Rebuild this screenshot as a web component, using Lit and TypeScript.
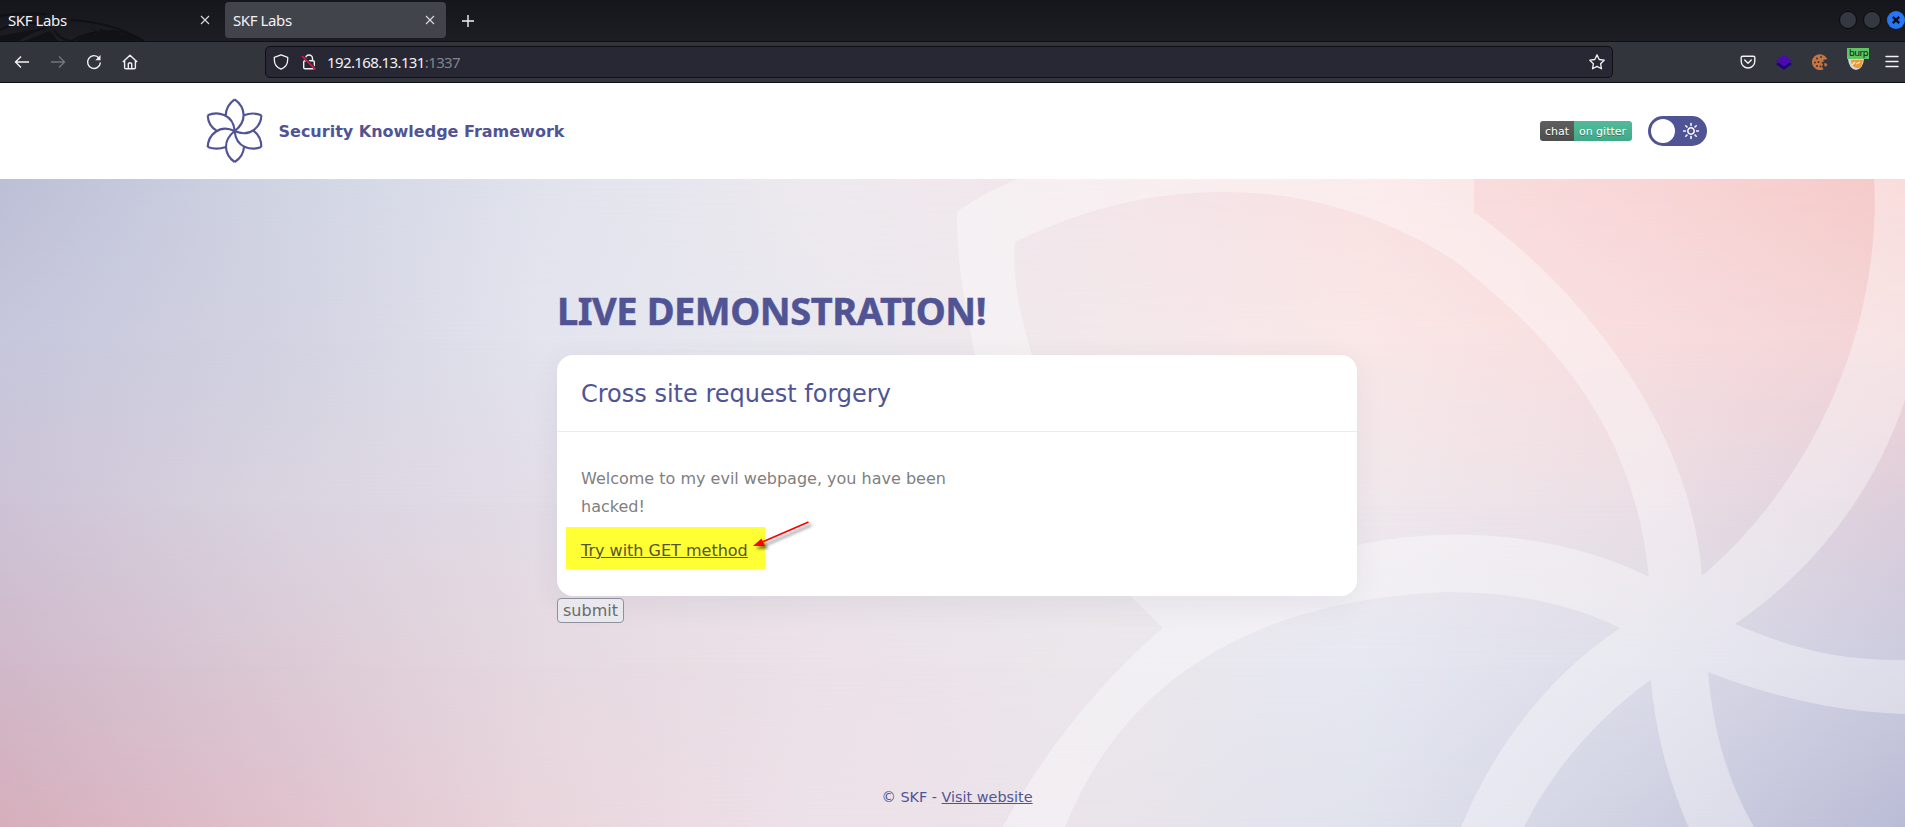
import { LitElement, html, css, svg } from "lit";
import { customElement } from "lit/decorators.js";
import { styleMap } from "lit/directives/style-map.js";

const MESH = [
  ["#bdbfd7", "#d0d4e3", "#e1e3ed", "#eeeaef", "#f3e6ea", "#f9e1e2", "#f9d6d7", "#f5cac8"],
  ["#c6c7dc", "#d2d2e1", "#e3e4ee", "#e9e8ee", "#f2e8eb", "#fae7e7", "#f8dddf", "#f3d4d6"],
  ["#cdc3d6", "#d9d3df", "#e3dde7", "#e8e4ea", "#eae6eb", "#f0e8ec", "#ebdfe5", "#ddcedb"],
  ["#d0b9ca", "#dbc9d5", "#e6d9e0", "#ece1e8", "#ebe7eb", "#e6e8f2", "#dcdde9", "#cbcbdf"],
  ["#d6aebb", "#dfc0cb", "#e9d5dc", "#ede1e8", "#eae4ea", "#e0e2ec", "#cfd1e2", "#babbd5"],
];

@customElement("page-backdrop")
export class PageBackdrop extends LitElement {
  static styles = css`
    :host { position: absolute; inset: 0; overflow: hidden; display: block; }
    .layer { position: absolute; inset: 0; }
    svg { position: absolute; left: 0; top: 0; display: block; }
  `;
  render() {
    return html`
      ${MESH.map((row, i) => {
        const mask = i === 0 ? "none" : `linear-gradient(to bottom, transparent ${(i - 1) * 25}%, #000 ${i * 25}%)`;
        return html`<div class="layer" style=${styleMap({
          background: `linear-gradient(to right, ${row.join(",")})`,
          maskImage: mask,
        })}></div>`;
      })}
      <svg width="1905" height="648" viewBox="0 179 1905 648">
        <g fill="#fff" opacity="0.37">
          <path d="M957 211.500Q988 190 1018 179L1474 179L1474 212C1592 297 1692 435 1702 576L1690 610L1649 577C1636 450 1578 362 1477 279C1457 261 1436 248 1413 237C1275 168 1130 185 1015 242C1012 280 1020 315 1032 355C1070 460 1140 560 1260 580L1163 627.500C1065 530 985 455 975 355C962 290 957 260 957 211.500Z" />
          <path d="M1649 577C1560 532 1440 524 1345 548L1124 590L1163 627.500Q1064 715 1002.500 827L1065 827C1120 690 1240 600 1448 592C1510 592 1570 603 1620 628L1700 660L1690 580Z" />
          <path d="M1702 576C1815 480 1882 325 1874 179L1905 179L1905 400C1875 490 1815 570 1735 624L1680 640L1649 590Z" />
          <path d="M1735 624C1790 648 1840 661 1905 660L1905 714C1840 712 1775 698 1708 672L1651 660L1680 600Z" />
          <path d="M1708 672C1713 730 1727 780 1754 827L1688.500 827C1668 780 1655 730 1651 679.500L1660 630Z" />
          <path d="M1651 679.500C1595 720 1552 771 1524 827L1461 827C1495 745 1550 675 1620 628L1700 620L1708 660Z" />
        </g>
      </svg>`;
  }
}

const logo = svg`<path d="M134 43C165 65 174 108 134 138M134 43Q107 62 107 93M53 91C80 78 130 85 134 138M53 91Q55 123 80 137M53 186C55 150 88 116 134 138M53 186Q80 196 107 186M134 231C103 210 96 168 134 138M134 231Q161 213 162 185M214 186C186 197 138 191 134 138M214 186Q214 154 190 137M214 91C214 122 182 160 134 138M214 91Q188 80 162 91" fill="none" stroke="#505494" stroke-width="6.500" stroke-linejoin="round"/>`;

@customElement("browser-chrome")
export class BrowserChrome extends LitElement {
  static styles = css`
    :host { display: block; font-family: "Noto Sans", sans-serif; color: #f2f2f4; }
    svg { display: block; flex: none; }
    .tabs { position: relative; display: flex; align-items: center; background: linear-gradient(#15161b, #1c1e23); border-bottom: 1px solid #0e0f12; box-sizing: border-box; height: 42px; overflow: hidden; }
    .dragon { position: absolute; left: 0; top: 0; }
    .tab { position: relative; box-sizing: border-box; width: 221px; height: 36px; margin-bottom: 2px; display: flex; align-items: center; justify-content: space-between; padding: 0 11px 0 8px; font-size: 15px; letter-spacing: -0.4px; border-radius: 4px; }
    .tab span { padding-top: 1px; }
    .first { width: 215px; margin-right: 10px; padding-right: 5px; }
    .active { background: #42444c; }
    .plus { margin-left: 16px; }
    .wins { margin-left: auto; display: flex; gap: 6px; margin-right: 0; margin-bottom: 2px; }
    .bar { height: 41px; box-sizing: border-box; background: #33353d; border-bottom: 1px solid #0e0f12; display: flex; align-items: center; padding: 0 5px 0 14px; }
    .nav { display: flex; gap: 20px; width: 251px; align-items: center; }
    .url { box-sizing: border-box; width: 1348px; height: 32px; border: 1px solid #0e0f12; border-radius: 5px; background: #272833; display: flex; align-items: center; padding: 0 7px; font-size: 15px; letter-spacing: -0.62px; }
    .addr { margin-left: 10px; flex: 1; white-space: nowrap; }
    .port { color: #83848c; }
    .shield { margin-right: 12px; }
    .exts { display: flex; margin-left: auto; align-items: center; gap: 20px; }
    .ext { position: relative; width: 16px; height: 18px; }
    .badge { position: absolute; left: -1px; top: -5px; height: 11px; background: #5fc463; color: #10230f; font-size: 9.5px; letter-spacing: -0.6px; line-height: 10px; padding: 0 1px 0 2px; white-space: nowrap; }
  `;
  cross() {
    return html`<svg width="10" height="10" viewBox="0 0 10 10"><path d="M1 1L9 9M9 1L1 9" stroke="#dcdce0" stroke-width="1.1" /></svg>`;
  }
  render() {
    return html`
      <div class="tabs">
        <svg class="dragon" width="150" height="41" viewBox="0 0 150 41">
          <g fill="none" stroke="#101115" stroke-width="2">
            <path d="M0 16Q20 12 46 14M0 30Q24 18 46 26M0 41L14 36L46 28M70 20Q112 22 144 41M54 30Q60 40 72 41Q92 28 126 33L142 41" />
          </g>
          <path d="M0 36L42 28L18 41H0ZM24 41L50 31L58 41ZM90 27L100 33L100 28L110 33L112 29L120 34Q130 34 138 41H76Q92 30 98 35Z" fill="#111216" />
        </svg>
        <div class="tab first"><span>SKF Labs</span>${this.cross()}</div>
        <div class="tab active"><span>SKF Labs</span>${this.cross()}</div>
        <svg class="plus" width="12" height="12" viewBox="0 0 12 12"><path d="M6 0V12M0 6H12" stroke="#f2f2f4" stroke-width="1.4" /></svg>
        <div class="wins">
          <svg width="18" height="18"><circle cx="9" cy="9" r="8.500" fill="#343842" stroke="#090a0c" /></svg>
          <svg width="18" height="18"><circle cx="9" cy="9" r="8.500" fill="#343842" stroke="#090a0c" /></svg>
          <svg width="18" height="18"><circle cx="9" cy="9" r="9" fill="#2676f5" /><path d="M5.800 5.800L12.200 12.200M12.200 5.800L5.800 12.200" stroke="#0b0f1d" stroke-width="2.400" /></svg>
        </div>
      </div>
      <div class="bar">
        <div class="nav">
          <svg width="16" height="16" viewBox="0 0 16 16" fill="none" stroke="#f2f2f4" stroke-width="1.400"><path d="M15 8H1.500M7 2.500L1.500 8L7 13.500" /></svg>
          <svg width="16" height="16" viewBox="0 0 16 16" fill="none" stroke="#74767d" stroke-width="1.400"><path d="M1 8H14.500M9 2.500L14.500 8L9 13.500" /></svg>
          <svg width="16" height="16" viewBox="0 0 16 16" fill="none" stroke="#f2f2f4" stroke-width="1.400"><path d="M13 4A6.400 6.400 0 1 0 14.400 8.500" /><path d="M14.500 1V6.200H9.300Z" fill="#f2f2f4" stroke="none" /></svg>
          <svg width="16" height="16" viewBox="0 0 16 16" fill="none" stroke="#f2f2f4" stroke-width="1.400" stroke-linejoin="round"><path d="M.8 8L8 1.200L15.200 8M2.600 6.800V13.500Q2.600 14.800 3.900 14.800H12.100Q13.400 14.800 13.400 13.500V6.800M6.300 14.800V9.800Q6.300 9 7.100 9H8.900Q9.700 9 9.700 9.800V14.800" /></svg>
        </div>
        <div class="url">
          <svg class="shield" width="16" height="16" viewBox="0 0 16 16" fill="none" stroke="#f2f2f4" stroke-width="1.300"><path d="M8 .9L14.700 3.300V5.500C14.700 10.500 12 13.600 8 15.200C4 13.600 1.300 10.500 1.300 5.500V3.300Z" stroke-linejoin="round" /></svg>
          <svg width="16" height="16" viewBox="0 0 16 16" fill="none" stroke="#f2f2f4" stroke-width="1.400"><path d="M4.500 6.500V4.500A3.500 3.500 0 0 1 11.500 4.500V6.500M4 6.700H12Q13.300 6.700 13.300 8V13.500Q13.300 14.800 12 14.800H4Q2.700 14.800 2.700 13.500V8Q2.700 6.700 4 6.700Z" /><path d="M1.500 2L14.500 15" stroke="#272833" stroke-width="2.600" /><path d="M1 2L14.500 15.500" stroke="#e8144c" stroke-width="1.600" /></svg>
          <span class="addr">192.168.13.131<span class="port">:1337</span></span>
          <svg width="16" height="16" viewBox="0 0 16 16" fill="none" stroke="#f2f2f4" stroke-width="1.300" stroke-linejoin="round"><path d="M8 .9L10.200 5.500L15.200 6.200L11.600 9.700L12.500 14.800L8 12.400L3.500 14.800L4.400 9.700L.8 6.200L5.800 5.500Z" /></svg>
        </div>
        <div class="exts">
          <svg width="16" height="16" viewBox="0 0 16 16" fill="none" stroke="#f2f2f4" stroke-width="1.400"><path d="M2.500 2.200H13.500Q14.800 2.200 14.800 3.500V7.200A6.800 6.800 0 0 1 1.200 7.200V3.500Q1.200 2.200 2.500 2.200ZM4.700 6L8 9.200L11.300 6" stroke-linejoin="round" stroke-linecap="round" /></svg>
          <svg width="16" height="16" viewBox="0 0 16 16"><path d="M0 10L8 5L16 10L8 15.800Z" fill="#1c0178" /><path d="M0 7L8 .5L16 7L8 12.500Z" fill="#4a0aae" /></svg>
          <svg width="16" height="16" viewBox="0 0 16 16"><path d="M12.500 1.800A7.900 7.900 0 1 0 11.500 15.200L10 12.500L11 10L9 8.500L12 7.500L11 6L15.500 5Z" fill="#c27545" /><g fill="#502a1c"><circle cx="5" cy="4.500" r="1" /><circle cx="9" cy="3" r=".9" /><circle cx="3" cy="8.500" r=".9" /><circle cx="6.500" cy="8" r="1" /><circle cx="5" cy="12" r="1" /><circle cx="8.500" cy="12.500" r=".9" /></g><path d="M12 9.500L14 9L15.500 11L13 13Z" fill="#c27545" /></svg>
          <div class="ext"><svg width="18" height="18" viewBox="0 0 18 18"><path d="M0 6H16Q15 16 8 17Q1 16 0 6Z" fill="#d5d5d5" /><path d="M3 7H15L13 14Q8 17 4 12Z" fill="#f09a37" /><path d="M4 12L7 9M8 11L12 9" stroke="#fff0cc" stroke-width="1.200" /></svg><span class="badge">burp</span></div>
          <svg width="16" height="16" viewBox="0 0 16 16"><path d="M2 2.500H14M2 7.500H14M2 12.500H14" stroke="#f2f2f4" stroke-width="1.400" stroke-linecap="round" /></svg>
        </div>
      </div>`;
  }
}

@customElement("app-root")
export class AppRoot extends LitElement {
  static styles = css`
    :host { display: flex; flex-direction: column; width: 1905px; height: 827px; overflow: hidden; font-family: "DejaVu Sans", sans-serif; background: #fff; }
    * { box-sizing: border-box; }
    svg { display: block; flex: none; }
    .header { height: 96px; flex: none; display: flex; align-items: center; padding: 0 198px 0 206px; background: #fff; }
    .brand { margin-left: 15.5px; font-weight: 700; font-size: 16px; color: #505494; flex: 1; }
    .gitter { display: flex; width: 92px; height: 20px; border-radius: 3px; overflow: hidden; font-size: 11px; line-height: 21px; color: #fff; text-align: center; text-shadow: 0 1px 0 rgba(1, 1, 1, 0.3); margin-right: 16px; white-space: nowrap; }
    .chat { width: 34px; background: linear-gradient(#5f5f5f, #4e4e4e); }
    .on { flex: 1; padding-right: 1px; background: linear-gradient(#51bb99, #42a987); }
    .toggle { width: 59px; height: 30px; border-radius: 15px; background: #505494; padding: 3px 7px 3px 3px; display: flex; align-items: center; justify-content: space-between; }
    .knob { width: 24px; height: 24px; border-radius: 50%; background: #fff; }
    .main { position: relative; flex: 1; display: flex; flex-direction: column; align-items: center; }
    .content { position: relative; width: 800px; padding-top: 102px; margin-left: 9px; flex: 1; }
    h1 { margin: 0; height: 74px; font: 700 38px/58px "Noto Sans", sans-serif; letter-spacing: -0.45px; -webkit-text-stroke: 0.5px #505494; color: #505494; white-space: nowrap; }
    .card { height: 241px; background: #fff; border-radius: 16px; box-shadow: 0 8px 30px rgba(60, 50, 90, 0.07); }
    .title { height: 77px; border-bottom: 1px solid #ececec; padding: 0 24px; font-size: 24px; line-height: 78px; color: #505494; }
    .body { padding: 33px 24px 0; font-size: 16px; line-height: 28px; color: #808080; }
    p { margin: 0 0 16px; width: 376px; }
    .mark { position: relative; display: inline-block; }
    .mark::before { content: ""; position: absolute; left: -15px; top: -10px; width: 199px; height: 42px; background: #ffff33; }
    .link { position: relative; color: #555533; text-decoration: underline; }
    .arrow { position: absolute; left: 165px; top: -19px; }
    .submit { display: block; margin-top: 2px; width: 67px; height: 25px; padding: 0; border: 1px solid #8f8f9d; border-radius: 4px; background: #e9e9ed; color: #6a6a6a; font: 16px "DejaVu Sans", sans-serif; }
    .footer { position: relative; height: 60px; line-height: 60px; font-size: 14.4px; color: #505494; margin-left: 9px; }
  `;
  render() {
    const rays = [0, 45, 90, 135, 180, 225, 270, 315];
    return html`
      <browser-chrome></browser-chrome>
      <div class="header">
        <svg width="57" height="66" viewBox="48 39 171 198">${logo}</svg>
        <div class="brand">Security Knowledge Framework</div>
        <div class="gitter"><span class="chat">chat</span><span class="on">on gitter</span></div>
        <div class="toggle">
          <div class="knob"></div>
          <svg width="18" height="18" viewBox="-9 -9 18 18" fill="none" stroke="#fff" stroke-width="1.500" stroke-linecap="round">
            <circle r="3.200" />${rays.map((a) => svg`<path d="M0 -5.600V-7.400" transform="rotate(${a})" />`)}
          </svg>
        </div>
      </div>
      <div class="main">
        <page-backdrop></page-backdrop>
        <div class="content">
          <h1>LIVE DEMONSTRATION!</h1>
          <div class="card">
            <div class="title">Cross site request forgery</div>
            <div class="body">
              <p>Welcome to my evil webpage, you have been hacked!</p>
              <span class="mark"><a class="link">Try with GET method</a>
                <svg class="arrow" width="75" height="45" viewBox="746 518 75 45">
                  <defs><filter id="s" x="-20%" y="-40%" width="150%" height="200%"><feDropShadow dx="3" dy="3" stdDeviation="1.500" flood-opacity="0.5" /></filter></defs>
                  <g filter="url(#s)"><path d="M808.500 522L760 543" stroke="#f00" stroke-width="1.800" /><path d="M753 546L761.500 538.500L765 546Z" fill="#f00" /></g>
                </svg>
              </span>
            </div>
          </div>
          <button class="submit">submit</button>
        </div>
        <div class="footer">© SKF - <u>Visit website</u></div>
      </div>`;
  }
}
